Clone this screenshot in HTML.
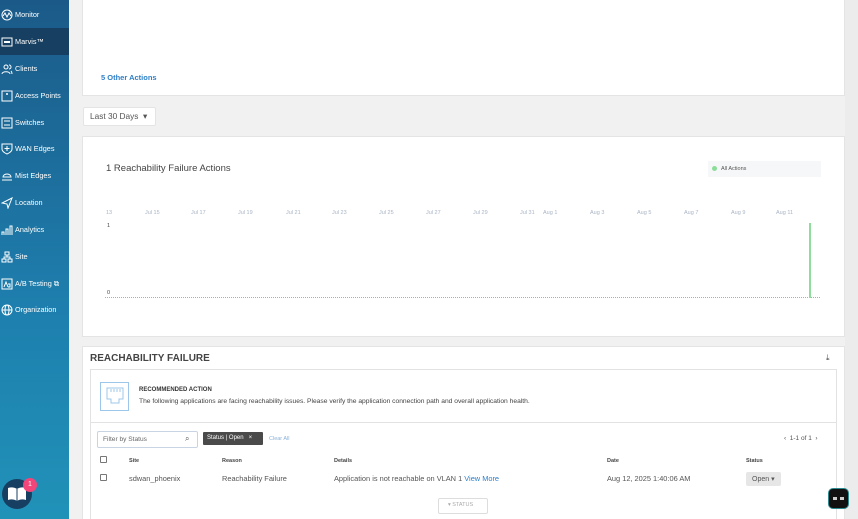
<!DOCTYPE html>
<html><head><meta charset="utf-8"><style>
*{box-sizing:border-box;margin:0;padding:0}
html{width:858px;height:519px;overflow:hidden}
body{width:858px;height:519px;overflow:hidden;background:#f1f1f1;font-family:"Liberation Sans",sans-serif;position:relative;color:#333}
.sb{position:absolute;left:0;top:0;width:69px;height:519px;background:linear-gradient(#1b5a88,#1e7fae 60%,#2092b8)}
.it{position:absolute;left:0;width:69px;height:27px;color:#fff;font-size:7.3px;line-height:28px;padding-left:15px;white-space:nowrap}
.it svg{position:absolute;left:1px;top:8px}
.sel{background:#173f61}
.card{position:absolute;background:#fff;border:1px solid #e4e4e4}
.t{position:absolute;white-space:nowrap}
.ax{position:absolute;top:210px;font-size:5.5px;color:#a8b4c4}
</style></head><body>
<div class="sb">
<div class="it" style="top:1px"><svg width="12" height="12"><circle cx="6" cy="6" r="5" fill="none" stroke="#fff"/><path d="M2 7l2-3 2 4 2-4 2 3" fill="none" stroke="#fff"/></svg>Monitor</div>
<div class="it sel" style="top:28px"><svg width="12" height="12"><rect x="1" y="2" width="10" height="8" fill="none" stroke="#fff"/><rect x="3" y="5" width="6" height="2" fill="#fff"/></svg>Marvis™</div>
<div class="it" style="top:55px"><svg width="12" height="12"><circle cx="5" cy="4" r="2" fill="none" stroke="#fff"/><path d="M1 11c0-3 8-3 8 0M8 2a2 2 0 010 4M10 8c1 1 1 2 1 3" fill="none" stroke="#fff"/></svg>Clients</div>
<div class="it" style="top:82px"><svg width="12" height="12"><rect x="1" y="1" width="10" height="10" fill="none" stroke="#fff"/><circle cx="6" cy="4" r="1" fill="#fff"/></svg>Access Points</div>
<div class="it" style="top:109px"><svg width="12" height="12"><rect x="1" y="1" width="10" height="10" fill="none" stroke="#fff"/><path d="M3 4h6M3 8h6" stroke="#fff"/></svg>Switches</div>
<div class="it" style="top:135px"><svg width="12" height="12"><path d="M1 1h10v5c0 3-5 5-5 5S1 9 1 6z" fill="none" stroke="#fff"/><path d="M6 3v5M3.5 5.5h5" stroke="#fff"/></svg>WAN Edges</div>
<div class="it" style="top:162px"><svg width="12" height="12"><path d="M2 7a4 3 0 118 0H2zM1 10h10" fill="none" stroke="#fff"/></svg>Mist Edges</div>
<div class="it" style="top:189px"><svg width="12" height="12"><path d="M11 1L1 6l5 1 1 4z" fill="none" stroke="#fff"/></svg>Location</div>
<div class="it" style="top:216px"><svg width="12" height="12"><path d="M1 11V8h2v3M5 11V5h2v6M9 11V2h2v9" fill="none" stroke="#fff"/></svg>Analytics</div>
<div class="it" style="top:243px"><svg width="12" height="12"><rect x="4" y="1" width="4" height="3" fill="none" stroke="#fff"/><rect x="1" y="8" width="4" height="3" fill="none" stroke="#fff"/><rect x="7" y="8" width="4" height="3" fill="none" stroke="#fff"/><path d="M6 4v2M3 8V6h6v2" fill="none" stroke="#fff"/></svg>Site</div>
<div class="it" style="top:270px"><svg width="12" height="12"><rect x="1" y="1" width="10" height="10" fill="none" stroke="#fff"/><path d="M3 9l2-5 2 5M7 6h2v3H7" fill="none" stroke="#fff"/></svg>A/B Testing ⧉</div>
<div class="it" style="top:296px"><svg width="12" height="12"><circle cx="6" cy="6" r="5" fill="none" stroke="#fff"/><ellipse cx="6" cy="6" rx="2" ry="5" fill="none" stroke="#fff"/><path d="M1 6h10" stroke="#fff"/></svg>Organization</div>
<div style="position:absolute;left:2px;top:479px;width:30px;height:30px;border-radius:50%;background:#173f61"></div>
<svg style="position:absolute;left:7px;top:486px" width="20" height="16"><path d="M1 2c3-1 6-1 9 1 3-2 6-2 9-1v12c-3-1-6-1-9 1-3-2-6-2-9-1z" fill="#fff"/><path d="M10 3v12" stroke="#173f61"/></svg>
<div style="position:absolute;left:23px;top:478px;width:14px;height:14px;border-radius:50%;background:#f2457a;color:#fff;font-size:7px;text-align:center;line-height:14px">1</div>
</div>
<div style="position:absolute;left:845px;top:0;width:13px;height:519px;background:#ececec"></div>

<div class="card" style="left:82px;top:-1px;width:763px;height:97px"></div>
<div class="t" style="left:101px;top:73px;font-size:7.5px;color:#2d7fc8;font-weight:bold">5 Other Actions</div>
<div class="card" style="left:83px;top:107px;width:73px;height:19px;border-radius:2px"></div>
<div class="t" style="left:90px;top:111px;font-size:8.3px;color:#555">Last 30 Days &nbsp;▾</div>

<div class="card" style="left:82px;top:136px;width:763px;height:201px"></div>
<div class="t" style="left:106px;top:163px;font-size:9.5px;color:#444">1 Reachability Failure Actions</div>
<div style="position:absolute;left:708px;top:161px;width:113px;height:16px;background:#f6f7f8"></div>
<div style="position:absolute;left:712px;top:166px;width:5px;height:5px;border-radius:50%;background:#8cdc9a"></div>
<div class="t" style="left:721px;top:166px;font-size:5.5px;color:#555">All Actions</div>
<div class="ax" style="left:106px">13</div><div class="ax" style="left:145px">Jul 15</div><div class="ax" style="left:191px">Jul 17</div><div class="ax" style="left:238px">Jul 19</div><div class="ax" style="left:286px">Jul 21</div><div class="ax" style="left:332px">Jul 23</div><div class="ax" style="left:379px">Jul 25</div><div class="ax" style="left:426px">Jul 27</div><div class="ax" style="left:473px">Jul 29</div><div class="ax" style="left:520px">Jul 31</div><div class="ax" style="left:543px">Aug 1</div><div class="ax" style="left:590px">Aug 3</div><div class="ax" style="left:637px">Aug 5</div><div class="ax" style="left:684px">Aug 7</div><div class="ax" style="left:731px">Aug 9</div><div class="ax" style="left:776px">Aug 11</div>
<div class="t" style="left:107px;top:223px;font-size:5.5px;color:#444">1</div>
<div class="t" style="left:107px;top:290px;font-size:5.5px;color:#444">0</div>
<div style="position:absolute;left:105px;top:297px;width:715px;border-top:1px dotted #7ccc8a"></div>
<div style="position:absolute;left:809px;top:223px;width:2px;height:75px;background:#8fdc9c"></div>

<div class="card" style="left:82px;top:346px;width:763px;height:180px"></div>
<div class="t" style="left:90px;top:353px;font-size:10px;font-weight:bold;color:#444">REACHABILITY FAILURE</div>
<div class="t" style="left:826px;top:353px;font-size:8px;color:#444">⤓</div>
<div style="position:absolute;left:90px;top:369px;width:747px;height:155px;border:1px solid #e2e2e2;border-bottom:none"></div>
<div style="position:absolute;left:90px;top:422px;width:747px;border-top:1px solid #e2e2e2"></div>
<div style="position:absolute;left:100px;top:382px;width:29px;height:29px;border:1px solid #9cc7ea"></div>
<svg style="position:absolute;left:105px;top:386px" width="20" height="20"><path d="M2 2h16v11h-4v4H6v-4H2z" fill="none" stroke="#9cc7ea"/><path d="M6 3v3M9 3v3M12 3v3M15 3v3" stroke="#9cc7ea"/></svg>
<div class="t" style="left:139px;top:387px;font-size:6px;font-weight:bold;color:#333">RECOMMENDED ACTION</div>
<div class="t" style="left:139px;top:398px;font-size:6.7px;color:#444">The following applications are facing reachability issues. Please verify the application connection path and overall application health.</div>
<div style="position:absolute;left:97px;top:431px;width:101px;height:17px;border:1px solid #c8d4e4;border-radius:2px"></div>
<div class="t" style="left:103px;top:436px;font-size:6.6px;color:#666">Filter by Status</div>
<div class="t" style="left:185px;top:434px;font-size:8px;color:#555">⌕</div>
<div style="position:absolute;left:203px;top:432px;width:60px;height:13px;background:#4a4a4a;border-radius:1px"></div>
<div class="t" style="left:207px;top:435px;font-size:6px;color:#fff">Status | Open &nbsp;&nbsp;×</div>
<div class="t" style="left:269px;top:436px;font-size:5.5px;color:#8ab1d8">Clear All</div>
<div class="t" style="left:784px;top:435px;font-size:6.5px;color:#555">‹ &nbsp;1-1 of 1 &nbsp;›</div>
<div style="position:absolute;left:100px;top:456px;width:7px;height:7px;border:1px solid #777;border-radius:1px"></div>
<div style="position:absolute;left:100px;top:474px;width:7px;height:7px;border:1px solid #777;border-radius:1px"></div>
<div class="t" style="left:129px;top:458px;font-size:5.5px;font-weight:bold;color:#444">Site</div>
<div class="t" style="left:222px;top:458px;font-size:5.5px;font-weight:bold;color:#444">Reason</div>
<div class="t" style="left:334px;top:458px;font-size:5.5px;font-weight:bold;color:#444">Details</div>
<div class="t" style="left:607px;top:458px;font-size:5.5px;font-weight:bold;color:#444">Date</div>
<div class="t" style="left:746px;top:458px;font-size:5.5px;font-weight:bold;color:#444">Status</div>
<div class="t" style="left:129px;top:474px;font-size:7.4px;color:#555">sdwan_phoenix</div>
<div class="t" style="left:222px;top:474px;font-size:7.4px;color:#555">Reachability Failure</div>
<div class="t" style="left:334px;top:474px;font-size:7.4px;color:#555">Application is not reachable on VLAN 1 <span style="color:#2d7fc8">View More</span></div>
<div class="t" style="left:607px;top:474px;font-size:7.4px;color:#555">Aug 12, 2025 1:40:06 AM</div>
<div style="position:absolute;left:746px;top:472px;width:35px;height:14px;background:#e6e6e6;border-radius:2px"></div>
<div class="t" style="left:752px;top:475px;font-size:7px;color:#555">Open ▾</div>
<div style="position:absolute;left:438px;top:498px;width:50px;height:16px;border:1px solid #ddd;border-radius:2px;background:#fff"></div>
<div class="t" style="left:448px;top:502px;font-size:5.5px;color:#aaa">▾ STATUS</div>
<div style="position:absolute;left:829px;top:489px;width:19px;height:19px;background:#111;border-radius:4px;box-shadow:0 0 0 1px #2a8a90"></div>
<div style="position:absolute;left:833px;top:497px;width:4px;height:3px;background:#ccc"></div>
<div style="position:absolute;left:840px;top:497px;width:4px;height:3px;background:#ccc"></div>
</body></html>
